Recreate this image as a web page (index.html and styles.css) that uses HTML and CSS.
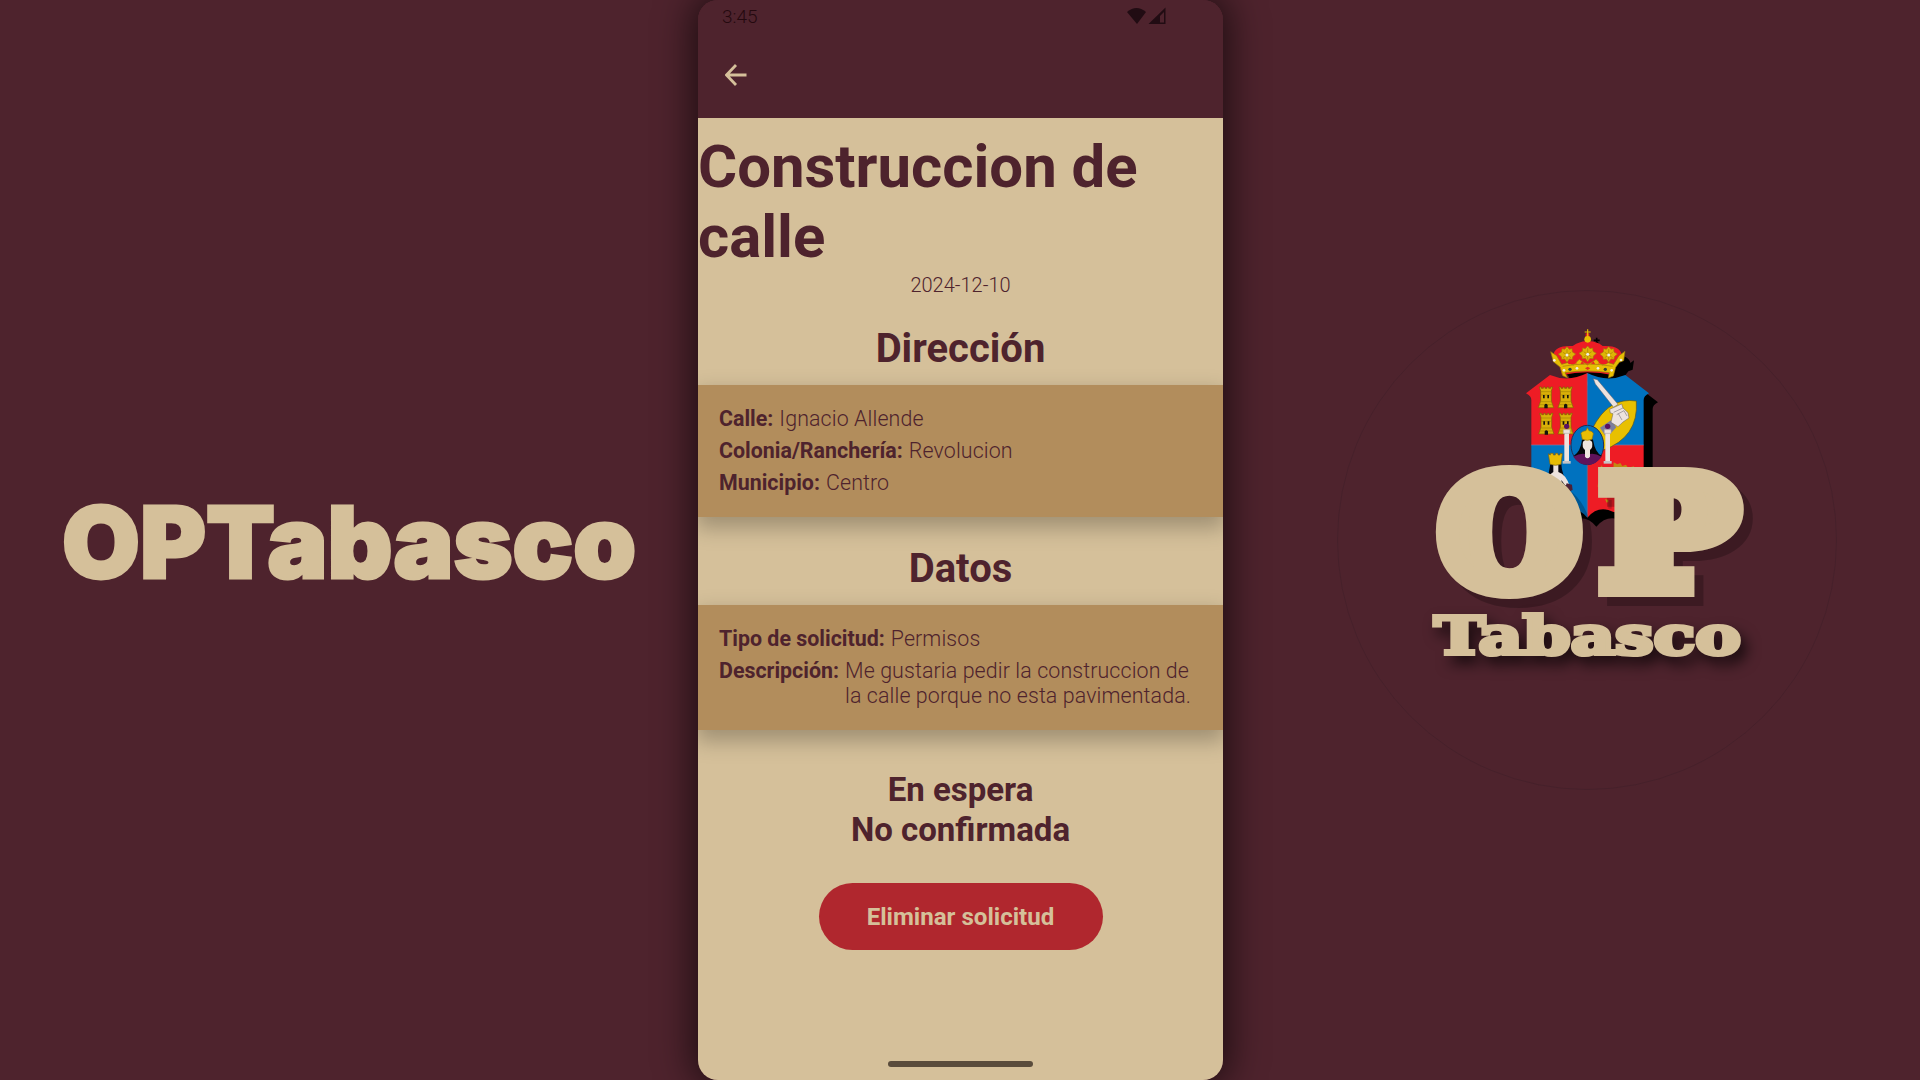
FILE: index.html
```html
<!DOCTYPE html>
<html lang="es">
<head>
<meta charset="utf-8">
<title>OPTabasco</title>
<link rel="stylesheet" href="styles.css">
</head>
<body>
<main class="stage">
  <section class="brand">
    <svg class="wordmark" width="570" height="100" viewBox="0 0 570 100" role="img" aria-label="OPTabasco">
      <text x="-2" y="88" textLength="574" lengthAdjust="spacingAndGlyphs">OPTabasco</text>
    </svg>
  </section>

  <section class="phone">
    <header class="topbar">
      <div class="status">
        <span class="clock">3:45</span>
        <svg class="signals" width="40" height="18" viewBox="0 0 40 18">
          <path d="M1 5Q10.500-3 20 5L11 17Z"/>
          <path d="M39.500 .5V17H22.500ZM38 5L34 9V15.500H38Z" fill-rule="evenodd"/>
        </svg>
      </div>
      <svg class="back" width="22" height="22" viewBox="0 0 22 22"><path d="M21.500 11H2M11 1L1.500 11L11 21"/></svg>
    </header>
    <div class="content">
      <h1>Construccion de calle</h1>
      <p class="date">2024-12-10</p>
      <h2>Dirección</h2>
      <dl class="card">
        <div class="row"><dt>Calle:</dt><dd>Ignacio Allende</dd></div>
        <div class="row"><dt>Colonia/Ranchería:</dt><dd>Revolucion</dd></div>
        <div class="row"><dt>Municipio:</dt><dd>Centro</dd></div>
      </dl>
      <h2>Datos</h2>
      <dl class="card card-data">
        <div class="row"><dt>Tipo de solicitud:</dt><dd>Permisos</dd></div>
        <div class="row"><dt>Descripción:</dt><dd>Me gustaria pedir la construccion de la calle porque no esta pavimentada.</dd></div>
      </dl>
      <p class="state">En espera<br>No confirmada</p>
      <button class="delete">Eliminar solicitud</button>
    </div>
    <div class="homebar"></div>
  </section>

  <section class="emblem">
    <svg width="502" height="502" viewBox="1336 289 502 502" role="img" aria-label="OP Tabasco">
      <defs>
        <path id="shield" d="M150 195Q205 218 262 189Q320 218 376 195L447 250Q431 258 431 270V560Q431 600 395 600Q355 615 325 600Q290 590 262 623Q235 590 199 600Q165 615 130 600Q94 600 94 560V270Q94 258 78 250Z"/>
        <path id="crown" d="M186 196Q181 166 160 134Q165 105 218 108Q240 94 257 94V70H268V94Q290 94 308 108Q360 105 365 134Q347 158 340 196Q262 177 186 196Z"/>
        <path id="crown-band" d="M152 125L170 137L185 163L202 158L220 165L238 148L262 165L288 148L307 165L325 158L341 163L357 137L375 124L371 152L358 157L347 172L340 198L325 204L328 188Q262 178 195 188L203 204L188 197L181 172L160 155Z"/>
        <clipPath id="shield-clip"><use href="#shield"/></clipPath>
        <g id="tower">
          <path d="M-20-32H-14V-28H-8V-32H-3V-28H3V-32H8V-28H14V-32H20L16-20V10L23 30H-23L-16 10V-20Z" fill="#d9b008" stroke="#7c6503" stroke-width="2"/>
          <path d="M-16-18H16M-16-8H16M-17 12H17M-20 21H20" stroke="#a48506" stroke-width="2"/>
          <path d="M-9-8H-4V2H-9ZM4-8H9V2H4ZM-5 32V22Q0 15 5 22V32Z" fill="#14120c"/>
        </g>
        <g id="fleur">
          <path d="M0-25L7-17L15-19L16-9L26-3L17 5L16 13L7 12L0 22L-7 12L-16 13L-17 5L-26-3L-16-9L-15-19L-7-17Z" fill="#dfb505" stroke="#a37e09" stroke-width="2"/>
          <path d="M-12-8L12 8M12-8L-12 8M0-18V16" stroke="#a37e09" stroke-width="2"/>
          <circle r="4.500" fill="#f4eee2"/>
        </g>
        <g id="column">
          <path d="M-7 2H7V88H-7Z"/><path d="M-10-8H10V3H-10Z" stroke="#b7aaa7" stroke-width="2"/>
          <path d="M-12 86H12V94H-12Z" fill="#c5c3c5"/><circle cy="-18" r="8" fill="#5b1261"/>
        </g>
      </defs>
      <circle class="ring" cx="1587" cy="540" r="249.500"/>
      <g transform="translate(1500 310) scale(.33333)">
        <g transform="translate(27 27)">
          <use href="#shield"/><use href="#crown"/><use href="#crown-band"/><path d="M263 56V75M254 64H272" stroke="#000" stroke-width="5"/>
        </g>
        <g clip-path="url(#shield-clip)">
          <path d="M70 180H262V405H70ZM262 405H450V640H262Z" fill="#ee1c25"/>
          <path d="M262 180H450V405H262ZM70 405H262V640H70Z" fill="#0072bf"/>
          <path d="M262 180V625M90 405H435" stroke="#8d769c" stroke-width="2"/>
        </g>
        <use href="#tower" x="138" y="263"/><use href="#tower" x="197" y="263"/>
        <use href="#tower" x="139" y="342"/><use href="#tower" x="197" y="342"/>
        <path d="M277 356Q325 260 409 273Q417 382 308 421Z" fill="#e8c000" stroke="#5d5419" stroke-width="2"/>
        <path d="M300 353L333 331L349 352L320 383Z" fill="#7c7e9d"/>
        <path d="M280 206L292 209L354 283L341 292L286 222Z" fill="#ede3de" stroke="#615d66" stroke-width="1.500"/>
        <path d="M329 298L365 282L369 294L384 308L387 324L369 336L354 350L333 337L339 311L331 309Z" fill="#ede3de" stroke="#615d66" stroke-width="1.500"/>
        <path d="M341 307L369 294M350 314L372 302L381 318M355 311L366 330" fill="none" stroke="#615d66" stroke-width="1.500"/>
        <ellipse cx="262" cy="405" rx="49" ry="59" fill="#0072bf" stroke="#202d56" stroke-width="3"/>
        <path d="M246 389Q262 378 279 389Q285 428 306 438Q262 464 221 438Q242 424 246 389Z" fill="#070609"/>
        <path d="M220 440Q240 429 255 432H270Q285 429 305 440Q289 464 263 464Q235 464 220 440Z" fill="#60135b"/>
        <path d="M249 395Q262 382 276 395Q280 412 270 420V440Q262 450 255 440V420Q245 412 249 395Z" fill="#f0e5df"/>
        <path d="M247 388L243 370Q247 362 258 362L262 353L267 362Q278 363 280 371L276 388Q262 394 247 388Z" fill="#e8bd04" stroke="#94760a" stroke-width="2"/>
        <g fill="#ede3de"><use href="#column" x="200" y="367"/><use href="#column" x="323" y="367"/></g>
        <path d="M151 462H184Q185 495 207 525L190 535L146 490Z" fill="#080710"/>
        <path d="M160 465H175V486Q198 493 210 530L195 525L184 510L190 550L145 497L160 486Z" fill="#ede3de"/>
        <path d="M145 431L151 435V430H160V435H166V430H174V435H180V430L187 431L183 463Q166 469 150 463Z" fill="#e8bd04" stroke="#765d15" stroke-width="2"/>
        <path d="M200 520L216 524L218 540L206 545L195 534Z" fill="#4c2035"/>
        <path d="M341 457L352 463L361 459L367 468L378 464L384 473L402 469V480H340ZM303 466L311 474L300 486M294 520L302 510V535L293 530M315 567L334 572L320 578" fill="#c08a12"/>
        <path d="M325 570H335V596H325Z" fill="#bd1a23"/>
        <use href="#crown" fill="#ee1c25"/>
        <use href="#crown-band" fill="#e6bd03" stroke="#94740d" stroke-width="2"/>
        <path d="M206 163Q202 152 214 148L232 160ZM241 163L246 154L254 163ZM272 163L280 154L286 163ZM293 160L312 148Q322 154 319 163Z" fill="#ee1c25"/>
        <path d="M188 169Q262 155 338 169" fill="none" stroke="#b88f0a" stroke-width="3"/>
        <use href="#fleur" x="201" y="135"/><use href="#fleur" x="263" y="133"/><use href="#fleur" x="326" y="135"/>
        <path d="M255 175L263 170L271 175L263 180Z" fill="#e33320"/>
        <g fill="#f4eee2"><circle cx="231" cy="175" r="4"/><circle cx="294" cy="175" r="4"/><circle cx="192" cy="181" r="4"/><circle cx="335" cy="181" r="4"/><circle cx="163" cy="151" r="4"/><circle cx="363" cy="150" r="4"/></g>
        <g fill="#354337"><circle cx="210" cy="178" r="5"/><circle cx="316" cy="178" r="5"/></g>
        <circle cx="263" cy="88" r="10" fill="#e8c000"/><path d="M263 58V80M254 66H272" stroke="#e8c000" stroke-width="3.500"/>
      </g>
      <g class="slab initials">
        <text x="1441" y="586" textLength="137" lengthAdjust="spacingAndGlyphs">O</text>
        <text x="1603" y="586" textLength="132" lengthAdjust="spacingAndGlyphs">P</text>
      </g>
      <text class="slab state-name" x="1434" y="654" textLength="307" lengthAdjust="spacingAndGlyphs">Tabasco</text>
    </svg>
  </section>
</main>
</body>
</html>
```
FILE: styles.css
```css
:root {
  --wine: #4e232d;
  --sand: #d5c09a;
  --bronze: #b28d5c;
  --red: #b0272e;
}

* { box-sizing: border-box; }

body {
  margin: 0;
  background: var(--wine);
  color: var(--wine);
  font-family: Roboto, sans-serif;
}

h1, h2, p, dl, dd { margin: 0; }
svg { display: block; }

.stage {
  display: grid;
  grid-template-columns: 698px 525px 697px;
  height: 1080px;
  overflow: hidden;
}

.brand {
  display: flex;
  align-items: center;
  justify-content: center;
}

.wordmark {
  fill: var(--sand);
  stroke: var(--sand);
  stroke-width: 3;
  font: 900 99px Inter, sans-serif;
  overflow: visible;
}

.phone {
  display: flex;
  flex-direction: column;
  border-radius: 20px;
  overflow: hidden;
  background: linear-gradient(var(--wine) 100px, var(--sand) 100px);
  box-shadow: 0 0 36px 6px rgba(0, 0, 0, .6);
}

.topbar {
  height: 117.500px;
  background: var(--wine);
  padding: 5px 57px 0 24px;
}

.status {
  display: flex;
  justify-content: space-between;
  height: 59px;
  color: #24090f;
  font-size: 19px;
  font-weight: 350;
  line-height: 24px;
}

.signals { margin-top: 2px; fill: #210c13; }
.back { fill: none; stroke: var(--sand); stroke-width: 2.800; margin-left: 3px; }

.content {
  flex: 1;
  display: flex;
  flex-direction: column;
  align-items: center;
  padding-top: 14px;
}

h1 { width: 100%; font-size: 59.900px; line-height: 70px; }
.date { font-size: 20px; font-weight: 350; line-height: 24px; margin-top: 1.500px; }
h2 { font-size: 40px; line-height: 47px; margin: 27.500px 0 13px; }

.card {
  display: flex;
  flex-direction: column;
  gap: 7px;
  width: 100%;
  height: 132px;
  padding: 21.500px 21px;
  background: var(--bronze);
  box-shadow: 0 9px 20px 2px rgba(0, 0, 0, .25);
  font-size: 21.400px;
  line-height: 25px;
}

.card + h2 { margin-top: 28px; }
.card-data { height: 125px; }
.row { display: flex; gap: 6px; }
dt { font-weight: 700; white-space: nowrap; }
dd { font-weight: 330; letter-spacing: .11px; }

.state {
  margin-top: 40.500px;
  font-size: 33px;
  font-weight: 700;
  line-height: 39.500px;
  text-align: center;
}

.delete {
  width: 284px;
  height: 67px;
  margin-top: 33.500px;
  padding: 2px 0 0;
  border: 0;
  border-radius: 34px;
  background: var(--red);
  color: var(--sand);
  font: 700 24.100px Roboto, sans-serif;
}

.homebar {
  width: 145px;
  height: 6px;
  margin: 0 auto 13px;
  border-radius: 3px;
  background: #5a4c3c;
}

.emblem {
  display: flex;
  align-items: center;
  justify-content: center;
  padding-left: 31px;
}

.ring { fill: none; stroke: #45202a; stroke-width: .9; }

.slab {
  fill: var(--sand);
  stroke: var(--sand);
  font-family: "DejaVu Serif", serif;
  font-weight: 700;
}

.initials {
  font-size: 147px;
  stroke-width: 22;
  filter: drop-shadow(9px 9px 0 rgba(0, 0, 0, .23));
}

.state-name {
  font-size: 52px;
  stroke-width: 4;
  filter: drop-shadow(6px 8px 7px rgba(0, 0, 0, .65));
}
```
